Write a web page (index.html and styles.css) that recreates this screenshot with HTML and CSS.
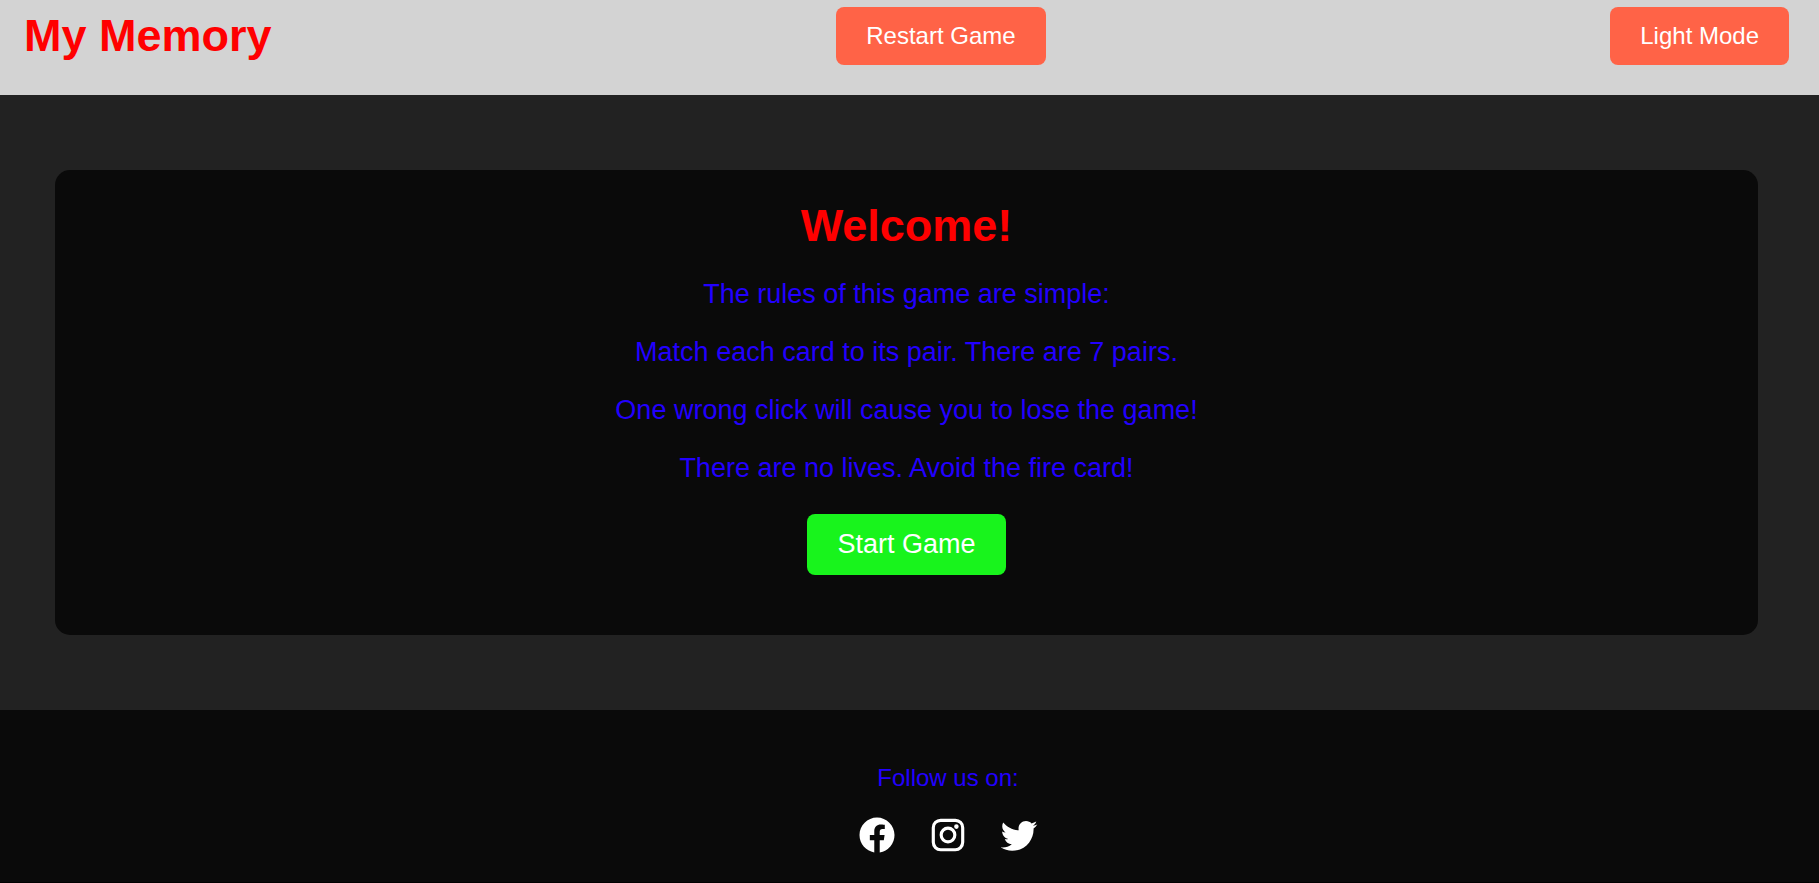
FILE: index.html
```html
<!DOCTYPE html>
<html lang="en">
<head>
<meta charset="utf-8">
<title>My Memory</title>
<link rel="stylesheet" href="styles.css">
</head>
<body>
<header class="header">
  <h1 class="title">My Memory</h1>
  <button class="button" type="button">Restart Game</button>
  <button class="button" type="button">Light Mode</button>
</header>
<main class="main">
  <section class="card">
    <h2 class="title">Welcome!</h2>
    <div class="rules">
      <p class="rule">The rules of this game are simple:</p>
      <p class="rule">Match each card to its pair. There are 7 pairs.</p>
      <p class="rule">One wrong click will cause you to lose the game!</p>
      <p class="rule">There are no lives. Avoid the fire card!</p>
    </div>
    <button class="button button-start" type="button">Start Game</button>
  </section>
</main>
<footer class="footer">
  <p class="follow">Follow us on:</p>
  <nav class="social" aria-label="Social media">
    <a class="social-link" href="#" aria-label="Facebook"><svg class="icon" viewBox="0 0 24 24"><path d="M12 2.04C6.5 2.04 2 6.53 2 12.06C2 17.06 5.66 21.21 10.44 21.96V14.96H7.9V12.06H10.44V9.85C10.44 7.34 11.93 5.96 14.22 5.96C15.31 5.96 16.45 6.15 16.45 6.15V8.62H15.19C13.95 8.62 13.56 9.39 13.56 10.18V12.06H16.34L15.89 14.96H13.56V21.96A10 10 0 0 0 22 12.06C22 6.53 17.5 2.04 12 2.04Z"/></svg></a>
    <a class="social-link" href="#" aria-label="Instagram"><svg class="icon" viewBox="0 0 24 24"><path d="M7.8 2.7h8.4a5.1 5.1 0 0 1 5.1 5.1v8.4a5.1 5.1 0 0 1-5.1 5.1H7.8a5.1 5.1 0 0 1-5.1-5.1V7.8a5.1 5.1 0 0 1 5.1-5.1m0 1.8a3.3 3.3 0 0 0-3.3 3.3v8.4a3.3 3.3 0 0 0 3.3 3.3h8.4a3.3 3.3 0 0 0 3.3-3.3V7.8a3.3 3.3 0 0 0-3.3-3.3zM16.8 5.9a1.3 1.3 0 1 1 0 2.6 1.3 1.3 0 0 1 0-2.6M12 7.2a4.8 4.8 0 1 1 0 9.6 4.8 4.8 0 0 1 0-9.6m0 1.8a3 3 0 1 0 0 6 3 3 0 0 0 0-6z"/></svg></a>
    <a class="social-link" href="#" aria-label="Twitter"><svg class="icon" viewBox="0 0 24 24"><path d="M22.46 6c-.77.35-1.6.58-2.46.69.88-.53 1.56-1.37 1.88-2.38-.83.5-1.75.85-2.72 1.05C18.37 4.5 17.26 4 16 4c-2.35 0-4.27 1.92-4.27 4.29 0 .34.04.67.11.98C8.28 9.09 5.11 7.38 3 4.79c-.37.63-.58 1.37-.58 2.15 0 1.49.75 2.81 1.91 3.56-.71 0-1.37-.2-1.95-.5v.03c0 2.08 1.48 3.82 3.44 4.21a4.22 4.22 0 0 1-1.93.07 4.28 4.28 0 0 0 4 2.98 8.521 8.521 0 0 1-5.33 1.84c-.34 0-.68-.02-1.02-.06C3.44 20.29 5.7 21 8.12 21 16 21 20.33 14.46 20.33 8.79c0-.19 0-.37-.01-.56.84-.6 1.56-1.36 2.14-2.23z"/></svg></a>
  </nav>
</footer>
</body>
</html>
```
FILE: styles.css
```css
body {
  margin: 0;
  background: #000;
  color: #2200ff;
  font-family: "Liberation Sans", Arial, sans-serif;
}

.header {
  display: flex;
  justify-content: space-between;
  align-items: center;
  padding: 7px 30px 30px 24px;
  background: #d3d3d3;
}

.title {
  margin: 0;
  color: #ff0000;
  font-size: 45px;
  line-height: 52px;
}

.button {
  padding: 15px 30px;
  border: 0;
  border-radius: 8px;
  background: #ff6347;
  color: #fff;
  font-family: inherit;
  font-size: 24px;
  line-height: 28px;
  cursor: pointer;
}

.button-start {
  background: #18f41c;
  font-size: 27px;
  line-height: 31px;
}

.main {
  padding: 75px 61px 75px 55px;
  background: #222;
}

.card {
  display: flex;
  flex-direction: column;
  align-items: center;
  padding: 30px 30px 60px;
  border-radius: 15px;
  background: #0a0a0a;
  text-align: center;
}

.rules {
  display: grid;
  gap: 27px;
  margin: 27px 0 30px;
}

.rule {
  margin: 0;
  font-size: 27px;
  line-height: 31px;
}

.footer {
  display: flex;
  flex-direction: column;
  align-items: center;
  gap: 22px;
  padding: 54px 0 26px 77px;
  background: #0a0a0a;
}

.follow {
  margin: 0;
  font-size: 24px;
  line-height: 28px;
}

.social {
  display: flex;
  gap: 29px;
}

.social-link {
  display: flex;
  color: #fff;
}

.icon {
  width: 42px;
  height: 42px;
  fill: currentColor;
}
```
